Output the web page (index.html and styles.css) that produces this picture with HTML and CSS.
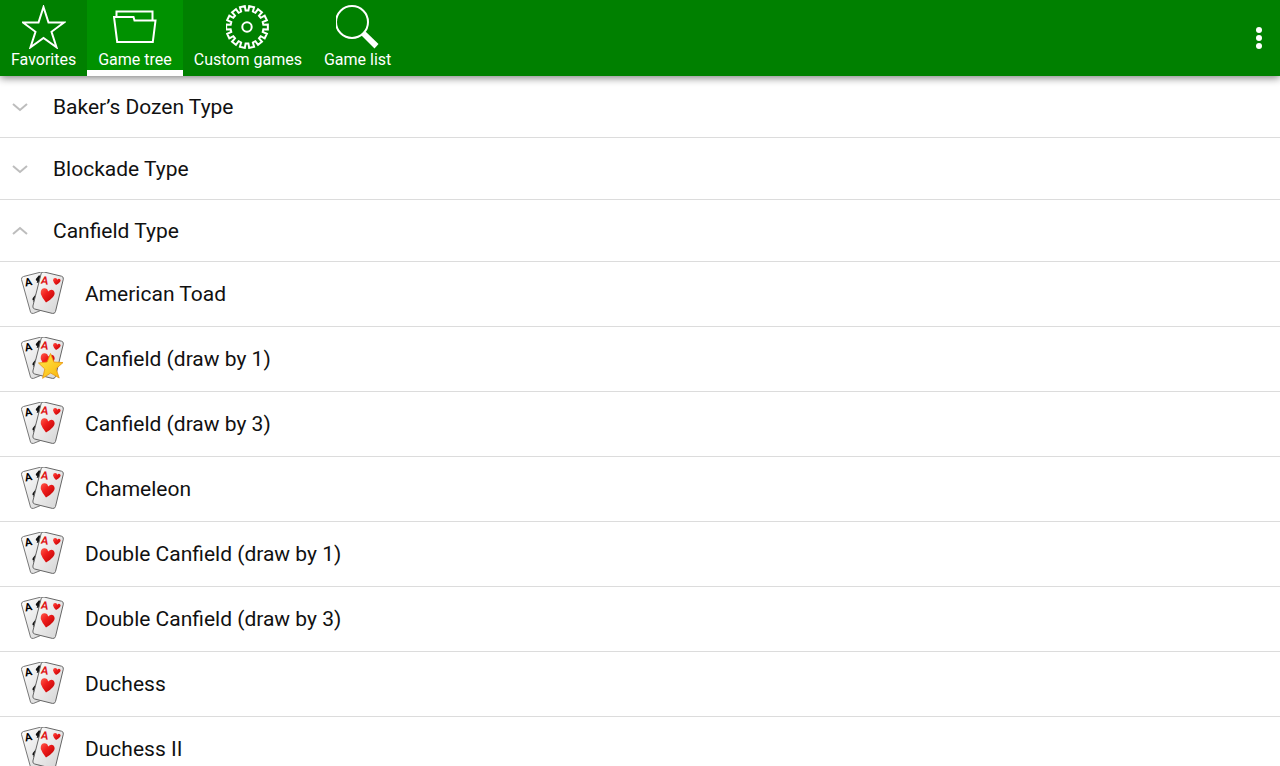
FILE: index.html
```html
<!DOCTYPE html>
<html lang="en">
<head>
    <meta charset="UTF-8">
    <meta name="viewport" content="width=device-width, initial-scale=1.0">
    <title>Solitaire</title>
    <link rel="stylesheet" href="styles.css">
</head>
<body>

<!-- shared gradients -->
<svg class="sprite" aria-hidden="true">
    <linearGradient id="paper" x1="0" y1="0" x2="1" y2="1">
        <stop offset="0" stop-color="#fff"/>
        <stop offset="1" stop-color="#d2d2d2"/>
    </linearGradient>
    <linearGradient id="red" x1="0" y1="0" x2="1" y2="1">
        <stop offset="0" stop-color="#ff5a4a"/>
        <stop offset="0.4" stop-color="#ee1c1c"/>
        <stop offset="1" stop-color="#b80000"/>
    </linearGradient>
    <linearGradient id="gold" x1="0" y1="0" x2="1" y2="1">
        <stop offset="0" stop-color="#ffe94a"/>
        <stop offset="1" stop-color="#f9b40c"/>
    </linearGradient>
</svg>

<!-- shared icons -->
<svg class="symbols" aria-hidden="true">
    <symbol id="chevron" viewBox="0 0 16 10">
        <path d="M1 2l7 6 7-6" fill="none" stroke="#bdbdbd" stroke-width="2"/>
    </symbol>
    <symbol id="cards" viewBox="0.5 1 44 44">
        <path d="M3 5.500L20 1.200Q22 .8 22.600 2.800L31 35L13 42.400Q10.600 43 10 41L1 8.500Q.6 6.200 3 5.500z" fill="url(#paper)" stroke="#777" stroke-width="1"/>
        <text class="ace" x="5" y="15.500" transform="rotate(-12 5 15)">A</text>
        <path d="M18.500 4.200l-3 3.500q-.8 2 1.300 2l-.6 2h3l2-6zM15.500 23l-3.200 4q-1 2.500 1 2.500l-.5 1.500 2 .5z" fill="#111"/>
        <path d="M23.500 1L41 5.200Q43.300 5.800 42.800 8.200L35 40.500Q34.300 43 31.800 42.400L14.200 38Q11.800 37.300 12.400 35L20.600 2.800Q21.300 .6 23.500 1z" fill="url(#paper)" stroke="#666" stroke-width="1"/>
        <text class="ace red" x="20" y="12.500" transform="rotate(10 20 12)">A</text>
        <path d="M35.500 14Q33 11.500 32.500 9.500Q32.400 6.500 35 7Q36.500 7.300 36.700 8.800Q38 7.200 39.300 8Q41 9.300 39 11.500Q38 12.800 35.500 14z" fill="url(#red)"/>
        <path d="M25.500 31.500Q21.500 26.500 20.300 23Q19.700 18 23.500 17.300Q27 17 27.600 20.500Q30.500 17.500 33 19.500Q35.500 22.500 32.500 26Q30 29 25.500 31.500z" fill="url(#red)"/>
    </symbol>
    <symbol id="gold-star" viewBox="0 0 26 26">
        <path d="M12.500 .5l3.300 8.500 9.200.6-7 6.100 3.200 9.300-8.500-5-8.100 5.300 2.200-9.300-6.300-6 8.700-1z" fill="url(#gold)" stroke="#e8960c" stroke-width=".8"/>
    </symbol>
</svg>

<header class="toolbar">
    <nav class="tabs">
        <button class="tab">
            <svg class="tab-icon" viewBox="0 0 44 44"><path d="M21.500 2l5 15.500H42L29.500 26.800l5 15.500-13-9.300-13 9.300 5-15.500L1 17.500h15.500z"/></svg>
            Favorites
        </button>
        <button class="tab active" aria-current="page">
            <svg class="tab-icon" viewBox="0 0 44 44"><path d="M3.500 11V6.500h36V15M1 12h19.500l1 3.500h21l-2.700 21.500H4.200z"/></svg>
            Game tree
        </button>
        <button class="tab">
            <svg class="tab-icon" viewBox="-21 -22 44 44">
                <circle r="4.700"/>
                <g id="gear"></g>
            </svg>
            Custom games
        </button>
        <button class="tab">
            <svg class="tab-icon" viewBox="1 0 44 44">
                <circle cx="17" cy="17" r="16"/>
                <path class="handle" d="M26.500 30.500l4-4L43.500 39l-4 4.500z"/>
            </svg>
            Game list
        </button>
    </nav>
    <button class="more" aria-label="More options">
        <svg width="6" height="22" viewBox="0 0 6 22" fill="#fff"><circle cx="3" cy="3" r="3"/><circle cx="3" cy="11" r="3"/><circle cx="3" cy="19" r="3"/></svg>
    </button>
</header>

<main class="tree">
    <button class="group" aria-expanded="false"><svg class="chevron"><use href="#chevron"/></svg>Baker’s Dozen Type</button>
    <button class="group" aria-expanded="false"><svg class="chevron"><use href="#chevron"/></svg>Blockade Type</button>
    <button class="group" aria-expanded="true"><svg class="chevron up"><use href="#chevron"/></svg>Canfield Type</button>
    <button class="game"><span class="game-icon"><svg class="cards"><use href="#cards"/></svg></span>American Toad</button>
    <button class="game"><span class="game-icon"><svg class="cards"><use href="#cards"/></svg><svg class="star"><use href="#gold-star"/></svg></span>Canfield (draw by 1)</button>
    <button class="game"><span class="game-icon"><svg class="cards"><use href="#cards"/></svg></span>Canfield (draw by 3)</button>
    <button class="game"><span class="game-icon"><svg class="cards"><use href="#cards"/></svg></span>Chameleon</button>
    <button class="game"><span class="game-icon"><svg class="cards"><use href="#cards"/></svg></span>Double Canfield (draw by 1)</button>
    <button class="game"><span class="game-icon"><svg class="cards"><use href="#cards"/></svg></span>Double Canfield (draw by 3)</button>
    <button class="game"><span class="game-icon"><svg class="cards"><use href="#cards"/></svg></span>Duchess</button>
    <button class="game"><span class="game-icon"><svg class="cards"><use href="#cards"/></svg></span>Duchess II</button>
</main>

<script>
    // gear outline, one tooth at a time
    const teeth = 14;
    let d = '';
    for (let i = 0; i < teeth; i++) {
        [[-0.14, 16.5], [-0.12, 21], [0.12, 21], [0.14, 16.5]].forEach(([offset, r]) => {
            const a = (i + 0.5) * 2 * Math.PI / teeth + offset;
            d += (d ? 'L' : 'M') + (r * Math.sin(a)).toFixed(2) + ' ' + (-r * Math.cos(a)).toFixed(2);
        });
    }
    document.getElementById('gear').innerHTML = '<path d="' + d + 'z"/>';
</script>

</body>
</html>
```
FILE: styles.css
```css
body {
    font-family: Roboto, sans-serif;
    display: flex;
    flex-direction: column;
    height: 100vh;
    margin: 0;
    background-color: #fff;
    color: #111;
}
button {
    font: inherit;
    color: inherit;
    background: none;
    border: none;
    padding: 0;
    cursor: pointer;
}
.sprite {
    position: absolute;
    width: 0;
    height: 0;
}
.symbols {
    display: none;
}
.toolbar {
    position: relative;
    flex: none;
    display: flex;
    justify-content: space-between;
    height: 76px;
    background-color: #008000;
    color: #fff;
    box-shadow: 0 2px 8px rgba(0, 0, 0, 0.5);
}
.tabs {
    display: flex;
}
.tab {
    display: flex;
    flex-direction: column;
    align-items: center;
    justify-content: flex-start;
    padding: 5px 11px 0;
    font-size: 16px;
    line-height: 22px;
}
.tab.active {
    background-color: #009100;
    box-shadow: inset 0 -6px #fff;
}
.tab-icon {
    width: 44px;
    height: 44px;
    fill: none;
    stroke: #fff;
    stroke-width: 2;
}
.tab-icon .handle {
    fill: #fff;
    stroke: none;
}
.more {
    display: flex;
    align-items: center;
    padding: 0 18px;
}
.tree {
    flex: 1;
    min-height: 0;
    overflow-y: auto;
    scrollbar-width: none;
}
.group,
.game {
    display: flex;
    align-items: center;
    box-sizing: border-box;
    width: 100%;
    border-bottom: 1px solid #dcdcdc;
    font-size: 21px;
    text-align: left;
}
.group {
    height: 62px;
    padding-left: 12px;
    gap: 25px;
}
.game {
    height: 65px;
    padding-left: 21px;
    gap: 20px;
}
.chevron {
    width: 16px;
    height: 10px;
}
.chevron.up {
    transform: rotate(180deg);
}
.game-icon {
    position: relative;
    display: flex;
}
.cards {
    width: 44px;
    height: 44px;
}
.star {
    position: absolute;
    right: 1px;
    bottom: 2px;
    width: 26px;
    height: 26px;
}
.ace {
    font-size: 11px;
    font-weight: bold;
}
.ace.red {
    fill: #e01818;
}
```
